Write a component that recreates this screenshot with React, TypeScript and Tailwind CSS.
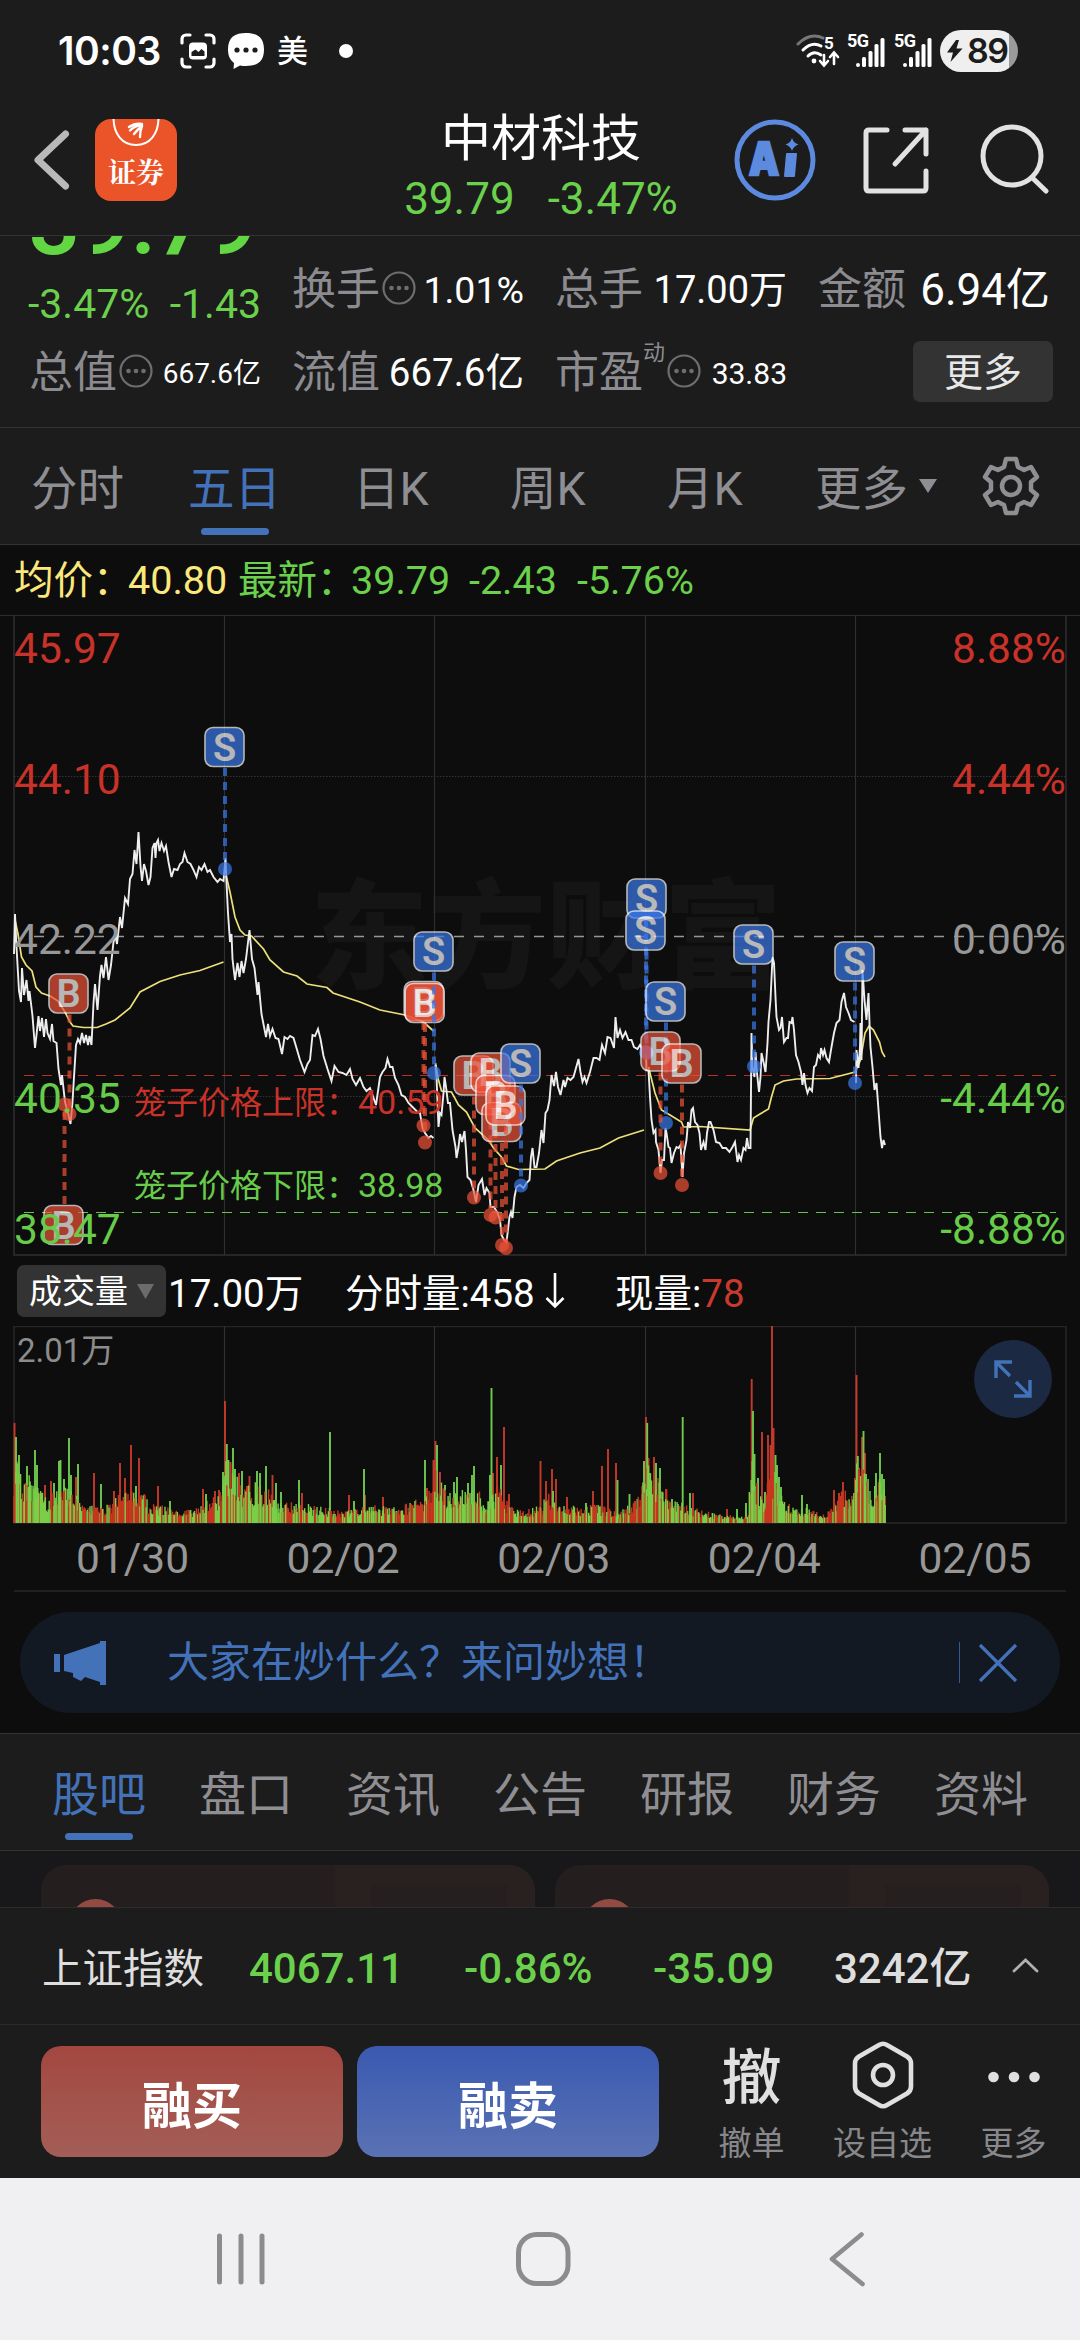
import type { ReactNode } from "react";

type Side = "B" | "S";
type Marker = { side: Side; x: number; y: number; dx: number; dy: number };

const DAY_LINES = [224.5, 434.5, 645.5, 855.5];

const PRICE = [
  "14,954 15,914 16.5,947 19,991 21,1002 22,968 24,995 26.5,980 28.5,1001 29.5,991 32.5,1016 35,1048 36.5,1035 38.5,1016 40,1031 42,1018 44,1037 46,1019 47.5,1033 50,1039 52,1024 53.5,1041 56.5,1043 58.5,1069 61,1085 62,1075 65,1102 68,1113 70.5,1124 72.5,1102 74,1077 76,1045 78,1039 80,1043 82,1033 84,1043 86,1035 88,1045 89.5,1036 91.5,1045 93.5,1003 95,984 97.5,1010 100,976 101.5,965 103.5,978 106,957 108.5,980 111,965 113.5,942 115.5,936 117,944 120,917 122,928 125,898 128,904 130,879 132.5,874 134.5,850 136.5,864 138.5,832 140.5,866 142,881 144,864 146,871 148.5,885 150.5,877 152.5,848 154.5,843 155.5,858 156.5,843 158,840 159.5,851 161.5,843 164,851 166,846 168.5,862 171.5,877 174,869 177.5,870 180,864 182.5,862 184.5,853 187.5,862 190.5,864 193.5,870 196.5,877 199,867 201.5,870 204.5,864 207.5,872 210,870 213.5,877 217.5,882 220,879 223.5,881 225.5,858 226.5,883 228,913 230,942 231.5,934 232.5,959 235,980 237.5,963 239.5,977 241.5,961 243.5,973 246,959 249.5,930 252,959 254.5,968 257.5,995 258.5,982 261.5,1014 266,1037 268,1024 270,1036 272.5,1029 275.5,1038 278.5,1039 282,1054 284.5,1037 287.5,1039 290,1036 293.5,1038 296.5,1048 300,1060 304.5,1072 307.5,1064 310,1060 312.5,1035 315,1036 318,1029 320.5,1039 323.5,1056 327.5,1069 331.5,1081 334.5,1066 338.5,1072 342.5,1073 346.5,1075 350,1069 352.5,1079 356,1085 360,1078 363.5,1087 366.5,1091 370,1088 376,1105 380,1077 382.5,1072 385.5,1068 387.5,1059 390,1067 392.5,1067 395,1078 398.5,1085 401.5,1095 405,1097 408.5,1103 412.5,1107 416.5,1111 420,1113 422.5,1128 425,1133 428.5,1138 431,1136 433.5,1138",
  "435.5,1065 436.5,1077 438.5,1127 440,1113 441.5,1115 443.5,1093 444.5,1077 446,1087 448,1103 450,1103 452.5,1130 455.5,1147 456.5,1158 458.5,1147 460,1134 462,1142 464.5,1131 466,1150 467.5,1177 470.5,1180 473.5,1190 476,1202 478.5,1185 482,1179 484.5,1195 486.5,1188 489.5,1193 490.5,1207 494,1207 497.5,1213 500,1220 501.5,1235 504,1240 506.5,1242 509.5,1217 511,1212 512.5,1218 514.5,1197 516.5,1187 520,1185 523.5,1188 526.5,1183 529.5,1180 531,1157 532.5,1148 534.5,1167 536.5,1167 539,1153 541.5,1130 543.5,1143 545.5,1113 547.5,1110 549.5,1100 551.5,1075 554,1086 556,1072 558,1087 560.5,1095 563.5,1080 565,1087 567.5,1078 570.5,1080 573.5,1077 576,1068 578.5,1059 580.5,1072 582.5,1082 584.5,1077 586.5,1083 590,1072 593.5,1058 596.5,1058 599.5,1060 602,1045 605,1053 607.5,1037 610.5,1038 614,1048 615.5,1017 617.5,1038 620,1030 622.5,1038 625.5,1032 628.5,1040 631.5,1040 634,1047 637.5,1049 640,1045 642.5,1050",
  "646,1053 646.5,1070 648.5,1070 650,1097 651.5,1120 653.5,1133 655.5,1130 656,1142 658.5,1150 660.5,1173 662,1160 664,1160 665.5,1128 666.5,1133 668.5,1147 670,1148 671.5,1163 674,1153 676.5,1147 678.5,1148 680.5,1145 682.5,1177 684,1153 686.5,1140 688,1122 690,1128 691.5,1110 693,1108 695,1122 697.5,1125 699.5,1133 701,1150 703.5,1142 705.5,1150 707,1133 709,1122 710.5,1122 713.5,1130 716,1142 719.5,1143 722.5,1148 726,1148 729.5,1152 732.5,1147 735,1142 737.5,1162 739,1155 741,1160 743.5,1148 745.5,1150 747,1138 748.5,1148 750.5,1148 751.5,1033 752.5,1067 754.5,1077 755.5,1052 757,1073 759,1092 760.5,1077 761.5,1053 763.5,1062 765.5,1072 767.5,1043 768.5,1022 770.5,1000 772.5,957 774,963 775.5,997 776.5,1017 779,1030 780.5,1028 782,1017 784,1042 786.5,1038 788,1038 789.5,1022 791.5,1023 792.5,1017 794,1030 796,1055 798.5,1062 801,1072 802.5,1085 804,1073 805.5,1085 807.5,1093 809.5,1088 812,1091 814,1067 816,1065 818,1055 820,1058 821,1048 823,1055 824.5,1050 826.5,1058 829,1062 831.5,1047 834,1033 836.5,1023 839.5,1020 841.5,1002 844,993 846,1007 848.5,1013 851,1020 854.5,1022",
  "856,1083 856.5,1050 858.5,1068 860,1047 860.5,1023 861.5,1060 862.5,970 864.5,1000 866.5,1020 868.5,993 869.5,1023 870.5,1047 872.5,1067 874.5,1090 876.5,1083 878.5,1110 880.5,1137 882,1148 883.5,1140 885,1145",
];

const AVERAGE = [
  "15,920 18,934 21.5,957 26,965 32,971 36,987 41.5,993 50,996 58,1001 65,1012 70,1022 73,1026 83.5,1027.5 97,1027.5 106,1024 115,1020 130,1008 140,992 160,981.5 180,975 200,970.5 223.5,962",
  "226,875 230,892 235,917 240,930 245,935 251.5,936 263.5,949 270,960 283.5,972 297,976 307,984 327,987.5 333,993 360,1002 380,1010 405,1015 423.5,1022 433.5,1031",
  "435.5,1063 438.5,1080 441.5,1091 451.5,1092 458.5,1105 466.5,1112 475,1128 488.5,1140 493.5,1148 501.5,1157 506.5,1166 518.5,1169.5 545,1169 556.5,1161 580,1153 600,1148 618.5,1138 644,1130",
  "648.5,1067 655,1093 661.5,1110 670,1115 681.5,1122 683.5,1127 700,1126.5 750,1130 753.5,1118 760,1114 768.5,1109 771.5,1097 775,1085 783.5,1081 796.5,1079 830,1078.5 843.5,1075 855,1072 860.5,1060 865,1033 869,1026 873.5,1030 879.5,1042 882,1052 885,1057",
];

const MARKERS: Marker[] = [
  { side: "S", x: 224.5, y: 747, dx: 225, dy: 869 },
  { side: "B", x: 68.5, y: 993.5, dx: 69.5, dy: 1114 },
  { side: "B", x: 63.5, y: 1225, dx: 64.5, dy: 1104.5 },
  { side: "B", x: 423.7, y: 1001, dx: 423.5, dy: 1125.5 },
  { side: "B", x: 424.7, y: 1003, dx: 425, dy: 1142.5 },
  { side: "S", x: 433.5, y: 951.5, dx: 434, dy: 1073 },
  { side: "B", x: 473.5, y: 1075.5, dx: 474, dy: 1197.5 },
  { side: "B", x: 490.5, y: 1072.5, dx: 490.5, dy: 1215 },
  { side: "B", x: 495.5, y: 1095, dx: 495.5, dy: 1217.5 },
  { side: "B", x: 501.5, y: 1122, dx: 502, dy: 1245 },
  { side: "B", x: 505.5, y: 1105.5, dx: 506, dy: 1248 },
  { side: "S", x: 520.5, y: 1063.5, dx: 521, dy: 1185.5 },
  { side: "S", x: 646.5, y: 898.5, dx: 646, dy: 1052 },
  { side: "S", x: 645.5, y: 930.5, dx: 646.5, dy: 1053 },
  { side: "S", x: 665.5, y: 1001.5, dx: 666, dy: 1123 },
  { side: "B", x: 660.5, y: 1051.5, dx: 660.5, dy: 1173 },
  { side: "B", x: 681.5, y: 1063.5, dx: 682, dy: 1185 },
  { side: "S", x: 753.5, y: 944.5, dx: 754, dy: 1066.5 },
  { side: "S", x: 854.5, y: 961.5, dx: 855, dy: 1083 },
];

// typical bar height along the x axis
const VOLUME_BASE: [number, number][] = [
  [14, 60], [22, 42], [35, 40], [45, 22], [60, 32], [75, 28], [85, 16], [105, 14], [118, 25], [140, 30],
  [150, 18], [180, 11], [195, 12], [205, 20], [222, 28], [226, 60], [240, 35], [262, 35], [280, 20], [300, 18],
  [320, 14], [345, 11], [375, 16], [400, 14], [415, 20], [428, 28], [433, 30], [436, 55], [445, 30], [460, 28],
  [475, 32], [488, 20], [500, 35], [510, 14], [525, 12], [540, 15], [550, 30], [556, 15], [580, 15], [600, 16],
  [620, 10], [640, 24], [646, 60], [660, 36], [675, 20], [695, 14], [715, 8], [740, 6], [748, 6], [751, 60],
  [758, 30], [765, 15], [770, 60], [778, 36], [786, 17], [800, 15], [825, 7], [832, 14], [843, 32], [851, 22],
  [856, 60], [865, 45], [872, 34], [884, 40], [886, 8],
];

// stretches where selling or buying clearly dominates
const GREEN_RUNS: [number, number][] = [[14, 75], [226, 282], [318, 330], [436, 478], [646, 690], [775, 802], [864, 886]];
const RED_RUNS: [number, number][] = [[85, 145], [330, 345], [405, 434], [496, 514], [540, 560], [632, 645], [762, 774], [820, 852]];

const RED_SPIKES: [number, number][] = [
  [14.5, 100], [45, 38], [51, 42], [76, 46], [94, 50], [114, 32], [120, 60], [125, 45], [131, 78], [139, 65],
  [158, 37], [203, 34], [215, 32], [219, 33], [225, 122], [230.5, 61], [239, 50], [249.5, 47], [272.5, 48],
  [302, 30], [349, 28], [365, 28], [383, 26], [427, 35], [433.5, 63], [435.5, 82], [440, 51], [493, 50],
  [497, 66], [504, 96], [509, 29], [540.5, 62], [546, 42], [552, 54], [556, 44], [567, 26], [593, 32],
  [602, 57], [608, 74], [616, 60], [642, 29], [646, 106], [648.5, 65], [654, 66], [666, 34], [693, 30],
  [727, 14], [751.7, 144], [762, 91], [768, 88], [770.5, 78], [772, 197], [773.5, 95], [834, 33], [839, 30],
  [843, 41], [855, 45], [856.5, 148], [859, 55], [862, 86], [865, 70], [885, 27],
];

const GREEN_SPIKES: [number, number][] = [
  [16, 86], [19, 68], [27, 57], [35, 73], [37, 58], [54, 40], [59, 62], [60.5, 63], [64, 44], [69, 85],
  [71, 48], [78, 59], [101, 39], [136, 37], [170, 22], [206, 29], [223, 51], [226.8, 79], [228, 63],
  [233, 75], [235, 54], [242, 52], [257, 52], [260, 50], [266, 57], [276, 40], [281, 31], [299, 43],
  [330, 91], [354, 22], [364, 54], [425, 63], [437, 78], [445, 38], [454, 41], [457, 46], [468, 40],
  [472, 48], [474, 57], [490, 48], [491.5, 135], [501, 58], [553, 32], [586, 20], [617.5, 43], [629.5, 29],
  [644, 62], [647.2, 100], [650, 50], [656, 60], [660, 55], [672, 24], [682.7, 106], [690, 30], [737, 14],
  [746, 20], [753, 112], [754.5, 69], [758, 45], [765, 31], [775.5, 68], [777, 58], [779, 46], [781, 36],
  [802, 28], [807, 19], [857.8, 67], [863.5, 92], [866, 49], [876, 50], [880, 70], [882, 49], [884, 44],
];

function baseAt(x: number) {
  for (let i = 1; i < VOLUME_BASE.length; i++) {
    const [x1, h1] = VOLUME_BASE[i];
    if (x <= x1) {
      const [x0, h0] = VOLUME_BASE[i - 1];
      return h0 + ((h1 - h0) * (x - x0)) / (x1 - x0);
    }
  }
  return 6;
}

const inside = (runs: [number, number][], x: number) => runs.some(([a, b]) => x >= a && x <= b);

// bars are drawn back to front in four layers so neither colour hides the other
function buildVolume() {
  let seed = 77;
  const next = () => {
    seed = (seed * 16807) % 2147483647;
    return seed / 2147483647;
  };
  const layers = ["", "", "", ""];
  for (let x = 14; x < 886; x += 0.95) {
    const h = (baseAt(x) * (0.45 + next() * 0.72)).toFixed(1);
    const redShare = inside(GREEN_RUNS, x) ? 0.27 : inside(RED_RUNS, x) ? 0.75 : 0.45;
    const red = next() < redShare;
    const front = next() > 0.5;
    layers[(front ? 2 : 0) + (red ? 0 : 1)] += `M${x.toFixed(1)} 1523v-${h}`;
  }
  return layers;
}

const volumeLayers = buildVolume();
const spikePath = (list: [number, number][]) => list.map(([x, h]) => `M${x} 1523v-${h}`).join("");

function StatusBar() {
  return (
    <div className="flex h-[102px] items-center pl-[58px] pr-[62px] text-white">
      <span className="w-[122px] font-['Inter'] text-[39px] font-semibold tracking-[-0.5px]">10:03</span>
      <svg className="h-9 w-9" viewBox="0 0 36 36" fill="none" stroke="#fff" strokeWidth="3.2" strokeLinecap="round">
        <path d="M2 10V6a4 4 0 0 1 4-4h4M26 2h4a4 4 0 0 1 4 4v4M34 26v4a4 4 0 0 1-4 4h-4M10 34H6a4 4 0 0 1-4-4v-4" />
        <rect x="9" y="9.500" width="18" height="17" rx="4" fill="#fff" stroke="none" />
        <path d="M11.500 23v-4l4-2.500 3 2.500 3-3 3 2.500V23z" fill="#1c1c1c" stroke="none" />
      </svg>
      <svg className="ml-[11px] h-[38px] w-[38px]" viewBox="0 0 38 38">
        <path d="M19 1C30 1 37 5 37 17.500S30 34 19 34c-2 0-4-.2-6-.6L6.500 37l.5-6C3 28 1 24 1 17.500 1 5 8 1 19 1z" fill="#fff" />
        <circle cx="10" cy="18" r="2.600" fill="#1c1c1c" />
        <circle cx="19" cy="18" r="2.600" fill="#1c1c1c" />
        <circle cx="28" cy="18" r="2.600" fill="#1c1c1c" />
      </svg>
      <span className="ml-[12px] pt-[2px] text-[31px] font-medium">美</span>
      <span className="ml-[31px] h-[14px] w-[14px] rounded-full bg-white" />
      <div className="ml-auto flex items-center">
        <svg className="h-[36px] w-[44px]" viewBox="0 0 44 36" fill="none" strokeWidth="3" strokeLinecap="round">
          <path d="M2 11Q14-1 27 5" stroke="#777" />
          <path d="M7 17q9-9 18-4M12 23q6-6 13-1" stroke="#fff" />
          <circle cx="18" cy="28" r="2.400" fill="#fff" />
          <path d="M28 22v10m-4-4l4 4.500 4-4.500M38 31V20m-4 4l4-4.500 4 4.500" stroke="#fff" strokeWidth="2.600" />
          <text x="28" y="16" fill="#fff" fontSize="17" fontWeight="700" fontFamily="Roboto">5</text>
        </svg>
        {[0, 1].map((i) => (
          <svg key={i} className="ml-[7px] h-[36px] w-[40px] overflow-visible" viewBox="0 0 40 36" fill="#fff">
            <text x="0" y="13.500" fontSize="18" fontWeight="700" fontFamily="Roboto" textLength="22">5G</text>
            <rect x="9" y="30" width="4" height="4" rx="2" />
            <rect x="15" y="24" width="4" height="10" rx="1.500" />
            <rect x="21.500" y="18" width="4" height="16" rx="1.500" />
            <rect x="27.500" y="11" width="4" height="23" rx="1.500" />
            <rect x="33.500" y="5" width="4" height="29" rx="1.500" />
          </svg>
        ))}
        <div className="ml-[6px] flex h-[42px] w-[78px] items-center overflow-hidden rounded-full bg-[linear-gradient(90deg,#efefef_88%,#9a9a9a_88%)] pl-[7px] text-[#1c1c1c]">
          <svg className="h-[22px] w-[16px]" viewBox="0 0 16 22" fill="currentColor">
            <path d="M9 0L0 12.500h6L3.500 22 15.500 8.500H9.500L12 0z" />
          </svg>
          <span className="ml-[4px] font-['Inter'] text-[34px] font-semibold leading-none tracking-[-1.5px]">89</span>
        </div>
      </div>
    </div>
  );
}

function Header() {
  return (
    <div className="flex h-[134px] items-start border-b border-[#333] pl-[32px] pr-[31px]">
      <svg className="mt-[26px] h-[64px] w-[40px]" viewBox="0 0 40 64" fill="none" stroke="#b9b9b9" strokeWidth="7" strokeLinecap="round" strokeLinejoin="round">
        <path d="M33.500 6L6 32l27.500 26" />
      </svg>
      <div className="ml-[23px] mt-[17px] flex h-[82px] w-[82px] flex-col items-center rounded-[16px] bg-[#ea5428]">
        <svg className="h-[38px] w-[60px] shrink-0" viewBox="0 0 60 38" fill="none" stroke="#fff" strokeLinecap="round">
          <path d="M7.500 0C8 15 16 26 30 26S52 15 52.500 0" strokeWidth="2" strokeLinecap="butt" />
          <path d="M23 8q6-4 13-3M24 11.500q5-5 12-5.500M28 15q4-5 8-8M34 18q0-6 2-11" strokeWidth="2.400" />
        </svg>
        <span className="font-['Noto_Serif_CJK_SC','Noto_Sans_CJK_SC',sans-serif] text-[28px] font-bold leading-[28px] text-white">证券</span>
      </div>
      <div className="ml-[219px] w-[290px] text-center">
        <div className="mt-[12px] text-[50px] leading-[50px] text-white">中材科技</div>
        <div className="mt-[10px] flex justify-center gap-[33px] text-[44px] leading-[50px] text-[#6bd04c]">
          <span>39.79</span>
          <span>-3.47%</span>
        </div>
      </div>
      <svg className="ml-auto mt-[15px] h-[86px] w-[86px]" viewBox="0 0 86 86">
        <circle cx="43" cy="43" r="38" fill="none" stroke="#5b8ade" strokeWidth="5" />
        <text x="17" y="58" fill="#5b8ade" stroke="#5b8ade" strokeWidth="2.500" fontFamily="Inter" fontWeight="900" fontSize="45" textLength="30" lengthAdjust="spacingAndGlyphs">A</text>
        <path d="M55 37h9l-2 22h-9z" fill="#5b8ade" stroke="#5b8ade" strokeWidth="2" strokeLinejoin="round" />
        <path d="M60 21q1.500 5 6.500 6.500-5 1.500-6.500 6.500-1.500-5-6.500-6.500 5-1.500 6.500-6.500z" fill="#5b8ade" />
      </svg>
      <svg className="ml-[43px] mt-[22px] h-[72px] w-[72px]" viewBox="0 0 72 72" fill="none" stroke="#e2e2e2" strokeWidth="5" strokeLinecap="round" strokeLinejoin="round">
        <path d="M26 6H8q-3 0-3 3v55q0 3 3 3h54q3 0 3-3V47M44 6h21v24M65 6L34 40" />
      </svg>
      <svg className="ml-[44px] mt-[21px] h-[74px] w-[72px]" viewBox="0 0 72 74" fill="none" stroke="#e2e2e2" strokeWidth="5" strokeLinecap="round">
        <circle cx="35" cy="33" r="29" />
        <path d="M55.500 55L69 68" />
      </svg>
    </div>
  );
}

function MoreDots({ className = "" }: { className?: string }) {
  return (
    <svg className={`h-[34px] w-[34px] ${className}`} viewBox="0 0 34 34" fill="#6e6e72">
      <circle cx="17" cy="17" r="15.500" fill="none" stroke="#6e6e72" strokeWidth="2.200" />
      <circle cx="9.500" cy="17" r="2.300" />
      <circle cx="17" cy="17" r="2.300" />
      <circle cx="24.500" cy="17" r="2.300" />
    </svg>
  );
}

function Stat({ label, info, sup, children }: { label: string; info?: boolean; sup?: string; children: ReactNode }) {
  return (
    <div className="flex h-[60px] items-center justify-between pt-[5px] text-white">
      <div className="flex items-center">
        <span className="text-[44px] text-[#8b8b90]">{label}</span>
        {sup && <span className="mb-[42px] text-[22px] leading-none text-[#8b8b90]">{sup}</span>}
        {info && <MoreDots className="ml-[2px] -mt-[6px]" />}
      </div>
      {children}
    </div>
  );
}

function Quote() {
  return (
    <div className="h-[192px] overflow-hidden border-b border-[#333] pl-[29px]">
      <div className="-mb-[36px] -mt-[62px] h-[88px] overflow-visible text-[89px] font-semibold leading-[100px] text-[#63d743]">39.79</div>
      <div className="grid grid-cols-[232px_232px_232px_232px] gap-x-[31px] gap-y-[23px] pt-[32px]">
        <div className="-ml-[1px] flex h-[60px] items-center justify-between pt-[33px] text-[41px] text-[#6bd04c]">
          <span>-3.47%</span>
          <span>-1.43</span>
        </div>
        <Stat label="换手" info><span className="text-[37.500px]">1.01%</span></Stat>
        <Stat label="总手"><span className="text-[38px]">17.00万</span></Stat>
        <Stat label="金额"><span className="text-[44px]">6.94亿</span></Stat>
        <Stat label="总值" info><span className="text-[28px]">667.6亿</span></Stat>
        <Stat label="流值"><span className="text-[38.500px]">667.6亿</span></Stat>
        <Stat label="市盈" sup="动" info><span className="text-[30px]">33.83</span></Stat>
        <div className="ml-[95px] flex h-[61px] w-[140px] items-center justify-center rounded-[7px] bg-[#333] pt-[3px] text-[39px] text-[#e8e8e8]">更多</div>
      </div>
    </div>
  );
}

function PeriodTabs() {
  const tabs = [
    { name: "分时", width: "w-[157px]" },
    { name: "五日", width: "w-[165px]", active: true },
    { name: "日K", width: "w-[157px]" },
    { name: "周K", width: "w-[157px]" },
    { name: "月K", width: "w-[148px]" },
  ];
  return (
    <div className="flex h-[117px] items-center border-b border-[#333] pl-[31px] pt-[6px] text-[46.500px] text-[#8e8e93]">
      {tabs.map((t) => (
        <div key={t.name} className={`relative ${t.width} ${t.active ? "text-[#4472b9]" : ""}`}>
          {t.name}
          {t.active && <span className="absolute bottom-[-17px] left-[13px] h-[7px] w-[68px] rounded-full bg-[#4472b9]" />}
        </div>
      ))}
      <span>更多</span>
      <svg className="ml-[11px] -mt-[6px] h-[16px] w-[18px]" viewBox="0 0 18 16" fill="#8e8e93">
        <path d="M0 1h18L9 15z" />
      </svg>
      <svg className="ml-[44px] -mt-[6px] h-[62px] w-[60px]" viewBox="0 0 60 62" fill="none" stroke="#8e8e93" strokeWidth="4.500" strokeLinejoin="round">
        <path d="M25 4h10l2 8 6 3 7-3 6 10-6 5v8l6 5-6 10-7-3-6 3-2 8H25l-2-8-6-3-7 3-6-10 6-5v-8l-6-5 6-10 7 3 6-3z" />
        <circle cx="30" cy="31" r="9" />
      </svg>
    </div>
  );
}

function AverageRow() {
  return (
    <div className="flex h-[71px] items-center border-b border-[#2c2c2c] pl-[14px] pt-[2px] text-[39.500px] text-[#6bd04c]">
      <span className="w-[114px] text-[#fbe87c]">均价：</span>
      <span className="w-[110px] text-[#fbe87c]">40.80</span>
      <span className="w-[113px]">最新：</span>
      <span className="w-[118px]">39.79</span>
      <span className="w-[108px]">-2.43</span>
      <span>-5.76%</span>
    </div>
  );
}

function MarkerPin({ m }: { m: Marker }) {
  const color = m.side === "S" ? "#3a78ea" : "#ee5239";
  return (
    <g opacity="0.7">
      <line x1={m.dx} x2={m.dx} y1={m.dy > m.y ? m.y + 21 : m.y - 21} y2={m.dy} stroke={color} strokeWidth="4" strokeDasharray="8 6" />
      <circle cx={m.dx} cy={m.dy} r="7" fill={color} />
      <rect x={m.x - 19.5} y={m.y - 19.5} width="39" height="39" rx="8" fill={color} stroke="#fff" strokeWidth="1.600" />
      <text x={m.x} y={m.y + 13.5} fill="#fff" textAnchor="middle" fontFamily="Roboto" fontWeight="600" fontSize="38">{m.side}</text>
    </g>
  );
}

function PriceChart() {
  return (
    <svg className="block h-[640px] w-full" viewBox="0 616 1080 640" fontFamily="Roboto, 'Noto Sans CJK SC', sans-serif">
      <text x="546" y="979" textAnchor="middle" fontSize="118" fontWeight="900" fill="#151515">东方财富</text>
      <path d="M14 616V1255H1066V616" fill="none" stroke="#2f2f2f" strokeWidth="1.500" />
      {DAY_LINES.map((x) => (
        <path key={x} d={`M${x} 616V1255`} stroke="#2f2f2f" strokeWidth="1.200" />
      ))}
      <path d="M14 776.500H1066M14 1096.500H1066" stroke="#333" strokeDasharray="1.500 1.500" />
      <path d="M34 936.500H1064" stroke="#979797" strokeWidth="1.600" strokeDasharray="10 10" />
      <path d="M24 1075.500H1056" stroke="#b53028" strokeWidth="1.200" strokeDasharray="10 8" />
      <path d="M24 1212.500H1056" stroke="#66c24b" strokeWidth="1.200" strokeDasharray="10 8" />
      {AVERAGE.map((p) => (
        <polyline key={p} points={p} fill="none" stroke="#ece07a" strokeWidth="1.700" />
      ))}
      {PRICE.map((p) => (
        <polyline key={p} points={p} fill="none" stroke="#eeeeee" strokeWidth="1.900" />
      ))}
      {MARKERS.map((m) => (
        <MarkerPin key={`${m.x}-${m.y}`} m={m} />
      ))}
      <g fontSize="34">
        <text x="134" y="1114" fill="#c83228" fontSize="32">笼子价格上限：</text>
        <text x="358" y="1114" fill="#c83228">40.59</text>
        <text x="134" y="1197" fill="#67cc4a" fontSize="32">笼子价格下限：</text>
        <text x="358" y="1197" fill="#67cc4a">38.98</text>
      </g>
      <g fontSize="42.500">
        <text x="14" y="663" fill="#c83228">45.97</text>
        <text x="14" y="794" fill="#c83228">44.10</text>
        <text x="14" y="954" fill="#979797">42.22</text>
        <text x="14" y="1113" fill="#67cc4a">40.35</text>
        <text x="14" y="1244" fill="#67cc4a">38.47</text>
        <g textAnchor="end">
          <text x="1066" y="663" fill="#c83228">8.88%</text>
          <text x="1066" y="794" fill="#c83228">4.44%</text>
          <text x="1066" y="954" fill="#979797">0.00%</text>
          <text x="1066" y="1113" fill="#67cc4a">-4.44%</text>
          <text x="1066" y="1244" fill="#67cc4a">-8.88%</text>
        </g>
      </g>
    </svg>
  );
}

function VolumeHeader() {
  return (
    <div className="flex h-[70px] items-center pl-[17px] text-[38.500px] text-white">
      <div className="flex h-[52px] w-[149px] items-center rounded-[7px] bg-[#333] pl-[12px] text-[33px]">
        <span className="pt-[2px]">成交量</span>
        <svg className="ml-[9px] h-[15px] w-[17px]" viewBox="0 0 17 15" fill="#6c6c6c">
          <path d="M0 0h17L8.500 15z" />
        </svg>
      </div>
      <span className="ml-[2px] w-[177px] pt-[6px]">17.00万</span>
      <span className="flex w-[270px] items-center pt-[6px]">
        分时量:458
        <svg className="-mt-[6px] ml-[10px] h-[36px] w-[20px]" viewBox="0 0 20 36" fill="none" stroke="#fff" strokeWidth="2.600">
          <path d="M10 0v33M1.500 25L10 33.500 18.500 25" />
        </svg>
      </span>
      <span className="pt-[6px]">现量:</span>
      <span className="pt-[6px] text-[#c83a2e]">78</span>
    </div>
  );
}

function VolumeChart() {
  return (
    <div className="relative h-[198px]">
      <svg className="block h-[198px] w-full" viewBox="0 1326 1080 198" fontFamily="Roboto, 'Noto Sans CJK SC', sans-serif">
        <rect x="14" y="1326.500" width="1052" height="196.500" fill="none" stroke="#262626" strokeWidth="1.500" />
        {DAY_LINES.map((x) => (
          <path key={x} d={`M${x} 1326V1523`} stroke="#303030" strokeWidth="1.200" />
        ))}
        <path d={spikePath(RED_SPIKES)} stroke="#c43a2a" strokeWidth="1.900" />
        <path d={spikePath(GREEN_SPIKES)} stroke="#6fc94c" strokeWidth="1.900" />
        {volumeLayers.map((d, i) => (
          <path key={i} d={d} stroke={i % 2 ? "#7ace48" : "#c8361f"} strokeWidth="1.400" />
        ))}
        <text x="17" y="1362" fontSize="33" fill="#8c8c8c">2.01万</text>
      </svg>
      <div className="absolute right-[28px] top-[14px] flex h-[78px] w-[78px] items-center justify-center rounded-full bg-[#1b2942]">
        <svg className="h-[40px] w-[40px]" viewBox="0 0 40 40" fill="none" stroke="#4273b9" strokeWidth="3.400">
          <path d="M19 3H3v16M3.500 3.500L17 17M37 21v16H21M23 23l13.500 13.500" />
        </svg>
      </div>
    </div>
  );
}

function Dates() {
  return (
    <div className="ml-[14px] mr-[14px] flex h-[68px] items-center border-b-2 border-[#212121] pl-[62px] pt-[4px] text-[42.500px] text-[#979797]">
      {["01/30", "02/02", "02/03", "02/04", "02/05"].map((d) => (
        <span key={d} className="w-[210.6px] shrink-0">{d}</span>
      ))}
    </div>
  );
}

function AskBanner() {
  return (
    <div className="mx-[20px] mb-[20px] mt-[20px] flex h-[101px] items-center rounded-full bg-[#121922] pl-[34px] pr-[42px] text-[#4472b9]">
      <svg className="h-[46px] w-[52px]" viewBox="0 0 52 46" fill="currentColor">
        <path d="M0 14h6v18H0zM10 15L46 3V1h6v44h-6v-3l-15-5-4 4-8-4v-4l-9-2z" />
      </svg>
      <span className="ml-[61px] pt-[2px] text-[42px]">大家在炒什么？来问妙想！</span>
      <span className="ml-auto h-[41px] w-px bg-[#345a93]" />
      <svg className="ml-[18px] h-[40px] w-[40px]" viewBox="0 0 40 40" fill="none" stroke="currentColor" strokeWidth="3.200">
        <path d="M2 2l36 36M38 2L2 38" />
      </svg>
    </div>
  );
}

function SectionTabs() {
  const tabs = ["股吧", "盘口", "资讯", "公告", "研报", "财务", "资料"];
  return (
    <div className="flex h-[118px] items-center border-y border-[#333] bg-[#1c1c1c] pl-[52px] pt-[6px] text-[47px] text-[#8e8e93]">
      {tabs.map((t, i) => (
        <div key={t} className={`relative w-[147px] shrink-0 ${i === 0 ? "text-[#4472b9]" : ""}`}>
          {t}
          {i === 0 && <span className="absolute bottom-[-16px] left-[13px] h-[7px] w-[68px] rounded-full bg-[#4472b9]" />}
        </div>
      ))}
    </div>
  );
}

function FeedPeek() {
  return (
    <div className="flex h-[56px] gap-[20px] overflow-hidden bg-[#18181a] pl-[41px] pt-[14px]">
      {[0, 1].map((i) => (
        <div key={i} className="relative h-[120px] w-[494px] shrink-0 overflow-hidden rounded-[26px] bg-[linear-gradient(90deg,#241e1e_59%,#292120_60%)]">
          <span className="absolute left-[28px] top-[34px] h-[53px] w-[53px] rounded-full bg-[#934a43]" />
          <span className="absolute left-[330px] top-[19px] h-[100px] w-[136px] bg-[#251f1f]" />
        </div>
      ))}
    </div>
  );
}

function IndexBar() {
  return (
    <div className="flex h-[118px] items-center border-y border-[#2c2c2c] bg-[#1c1c1c] pl-[42px] pt-[7px] text-[42px] font-medium text-[#6bd04c]">
      <span className="w-[207px] text-[40.500px] font-normal text-[#dedede]">上证指数</span>
      <span className="w-[215px]">4067.11</span>
      <span className="w-[189px]">-0.86%</span>
      <span className="w-[181px]">-35.09</span>
      <span className="w-[178px] text-[#dedede]">3242亿</span>
      <svg className="-mt-[8px] h-[15px] w-[27px]" viewBox="0 0 27 15" fill="none" stroke="#b0b0b0" strokeWidth="2.800" strokeLinecap="round">
        <path d="M2 13L13.500 2 25 13" />
      </svg>
    </div>
  );
}

function ActionBar() {
  return (
    <div className="flex h-[153px] items-start bg-[#1c1c1c] pl-[41px] pt-[21px]">
      <div className="flex h-[111px] w-[302px] items-center justify-center rounded-[20px] bg-linear-to-b from-[#a3473f] to-[#a35e57] pt-[11px] text-[50px] font-bold text-white">融买</div>
      <div className="ml-[14px] flex h-[111px] w-[302px] items-center justify-center rounded-[20px] bg-linear-to-b from-[#3a59b0] to-[#5a72b4] pt-[11px] text-[50px] font-bold text-white">融卖</div>
      <div className="ml-[27px] -mt-[7px] grid grid-cols-[131px_131px_131px] text-[33px] text-[#88888c]">
        <div className="flex flex-col items-center">
          <span className="h-[84px] text-[60px] font-medium leading-[79px] text-[#e0e0e0]">撤</span>
          <span>撤单</span>
        </div>
        <div className="flex flex-col items-center">
          <svg className="mb-[6px] h-[78px] w-[64px]" viewBox="0 0 64 78" fill="none" stroke="#e0e0e0" strokeWidth="4.600" strokeLinejoin="round">
            <path d="M28 6q4-2.500 8 0l20 11.500q4 2.500 4 7v23q0 4.500-4 7L36 66q-4 2.500-8 0L8 54.500q-4-2.500-4-7v-23q0-4.500 4-7z" />
            <circle cx="32" cy="36" r="10" />
          </svg>
          <span>设自选</span>
        </div>
        <div className="flex flex-col items-center">
          <svg className="mb-[6px] h-[78px] w-[54px]" viewBox="0 0 54 78" fill="#e0e0e0">
            <circle cx="6.500" cy="38" r="5.300" />
            <circle cx="27" cy="38" r="5.300" />
            <circle cx="47.500" cy="38" r="5.300" />
          </svg>
          <span>更多</span>
        </div>
      </div>
    </div>
  );
}

function NavBar() {
  return (
    <div className="flex h-[162px] items-center bg-[#f0f0f2] pl-[216px]">
      <svg className="h-[56px] w-[50px]" viewBox="0 0 50 56" stroke="#8c8c8c" strokeWidth="5" strokeLinecap="round">
        <path d="M3.500 5v46M25 5v46M46 5v46" />
      </svg>
      <svg className="ml-[249px] h-[56px] w-[56px]" viewBox="0 0 56 56" fill="none" stroke="#8c8c8c" strokeWidth="5">
        <rect x="3.500" y="3.500" width="49.500" height="49" rx="18" />
      </svg>
      <svg className="ml-[257px] h-[56px] w-[38px]" viewBox="0 0 38 56" fill="none" stroke="#8c8c8c" strokeWidth="4.600" strokeLinecap="round" strokeLinejoin="round">
        <path d="M33.500 3.500L4 28l30.500 25" />
      </svg>
    </div>
  );
}

export default function App() {
  return (
    <div className="h-[2340px] w-[1080px] overflow-hidden whitespace-nowrap bg-[#0d0d0d] font-['Roboto','Noto_Sans_CJK_SC',sans-serif] leading-[1.25]">
      <div className="bg-[#1c1c1c]">
        <StatusBar />
        <Header />
        <Quote />
        <PeriodTabs />
      </div>
      <AverageRow />
      <PriceChart />
      <VolumeHeader />
      <VolumeChart />
      <Dates />
      <AskBanner />
      <SectionTabs />
      <FeedPeek />
      <IndexBar />
      <ActionBar />
      <NavBar />
    </div>
  );
}
